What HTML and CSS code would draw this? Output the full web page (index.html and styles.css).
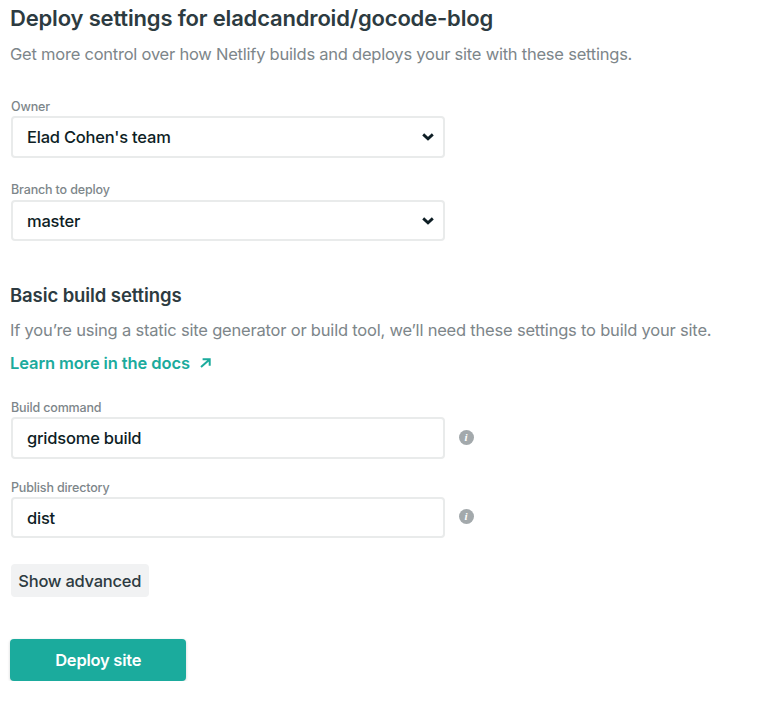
FILE: index.html
```html
<!DOCTYPE html>
<html lang="en">
<head>
<meta charset="utf-8">
<title>Deploy settings</title>
<link rel="stylesheet" href="styles.css">
</head>
<body>
<main>
<h1>Deploy settings for eladcandroid/gocode-blog</h1>
<p class="intro">Get more control over how Netlify builds and deploys your site with these settings.</p>
<form>
<div class="field owner"><span class="label">Owner</span>
<div class="box"><span>Elad Cohen's team</span><svg class="chev" viewBox="0 0 12 8"><path d="M1.2 1.4L6 5.8l4.8-4.4"/></svg></div></div>
<div class="field branch"><span class="label">Branch to deploy</span>
<div class="box"><span>master</span><svg class="chev" viewBox="0 0 12 8"><path d="M1.2 1.4L6 5.8l4.8-4.4"/></svg></div></div>
<h2>Basic build settings</h2>
<p class="hint">If you’re using a static site generator or build tool, we’ll need these settings to build your site.</p>
<a class="docs"><span>Learn more in the docs</span><svg viewBox="0 0 11 10"><path d="M1 9L9 2M2.6 1.2h7.1v6.6"/></svg></a>
<div class="field command"><span class="label">Build command</span>
<div class="row"><div class="box"><span>gridsome build</span></div><span class="info">i</span></div></div>
<div class="field publish"><span class="label">Publish directory</span>
<div class="row"><div class="box"><span>dist</span></div><span class="info">i</span></div></div>
<button type="button" class="advanced">Show advanced</button>
<button type="button" class="deploy">Deploy site</button>
</form>
</main>
</body>
</html>
```

FILE: styles.css
```css
* { box-sizing: border-box; }
body { margin: 0; background: #fff; color: #0e1e25; font-family: Inter, sans-serif; }
main { padding: 4px 10px 0; }
h1, h2, p { margin: 0; white-space: nowrap; }
h1 { font-size: 22px; line-height: 28px; font-weight: 600; color: #2d3b41; letter-spacing: -.17px; }
.intro, .hint { font-size: 16.5px; line-height: 24px; color: #7d868a; letter-spacing: -.23px; }
.intro { margin-top: 10px; }
.hint { margin-top: 10px; letter-spacing: -.2px; }
.field { width: 435px; padding-left: 1px; }
.owner { margin-top: 33px; }
.branch { margin-top: 25px; }
.label { display: block; height: 17px; font-size: 12.5px; line-height: 14px; font-weight: 500; color: #7d868a; letter-spacing: -.15px; }
.owner .label { line-height: 15px; }
.box { flex: none; display: flex; align-items: center; justify-content: space-between; width: 434px; height: 41px; padding: 0 9px 0 14px; border: 2px solid #e9ebeb; border-radius: 4px; font-size: 16.5px; font-weight: 500; letter-spacing: -.22px; }
.owner .box, .command .box { height: 42px; }
.chev { width: 12px; height: 8px; fill: none; stroke: #0e1e25; stroke-width: 2.8; }
h2 { margin-top: 41px; font-size: 18.5px; line-height: 26px; font-weight: 600; color: #2d3b41; letter-spacing: -.1px; }
.docs { display: flex; align-items: center; gap: 10px; margin-top: 9px; height: 24px; font-size: 16.5px; font-weight: 600; color: #1bab9d; letter-spacing: -.1px; }
.docs svg { width: 11px; height: 10px; fill: none; stroke: currentColor; stroke-width: 2; }
.command { margin-top: 25px; }
.command .label { line-height: 16px; }
.publish { margin-top: 21px; }
.publish .label { line-height: 16px; }
.row { display: flex; align-items: center; gap: 13.5px; }
.info { flex: none; width: 15px; height: 15px; margin-bottom: 2px; border-radius: 50%; background: #a3a9ac; color: #fff; font: italic bold 11px/14px "Liberation Serif", serif; text-align: center; }
button { display: block; border: 0; font-family: inherit; font-size: 16.5px; white-space: nowrap; padding: 0; letter-spacing: -.25px; }
.advanced { margin-top: 26px; margin-left: .5px; width: 138.5px; height: 33px; background: #f1f2f3; border-radius: 4px; font-weight: 500; color: #2d3b41; }
.deploy { margin-top: 42px; margin-left: .4px; width: 175.6px; height: 42px; background: #1bab9d; border-radius: 4px; color: #fff; font-weight: 600; box-shadow: 0 1px 3px rgba(14, 30, 37, .2); }
```
